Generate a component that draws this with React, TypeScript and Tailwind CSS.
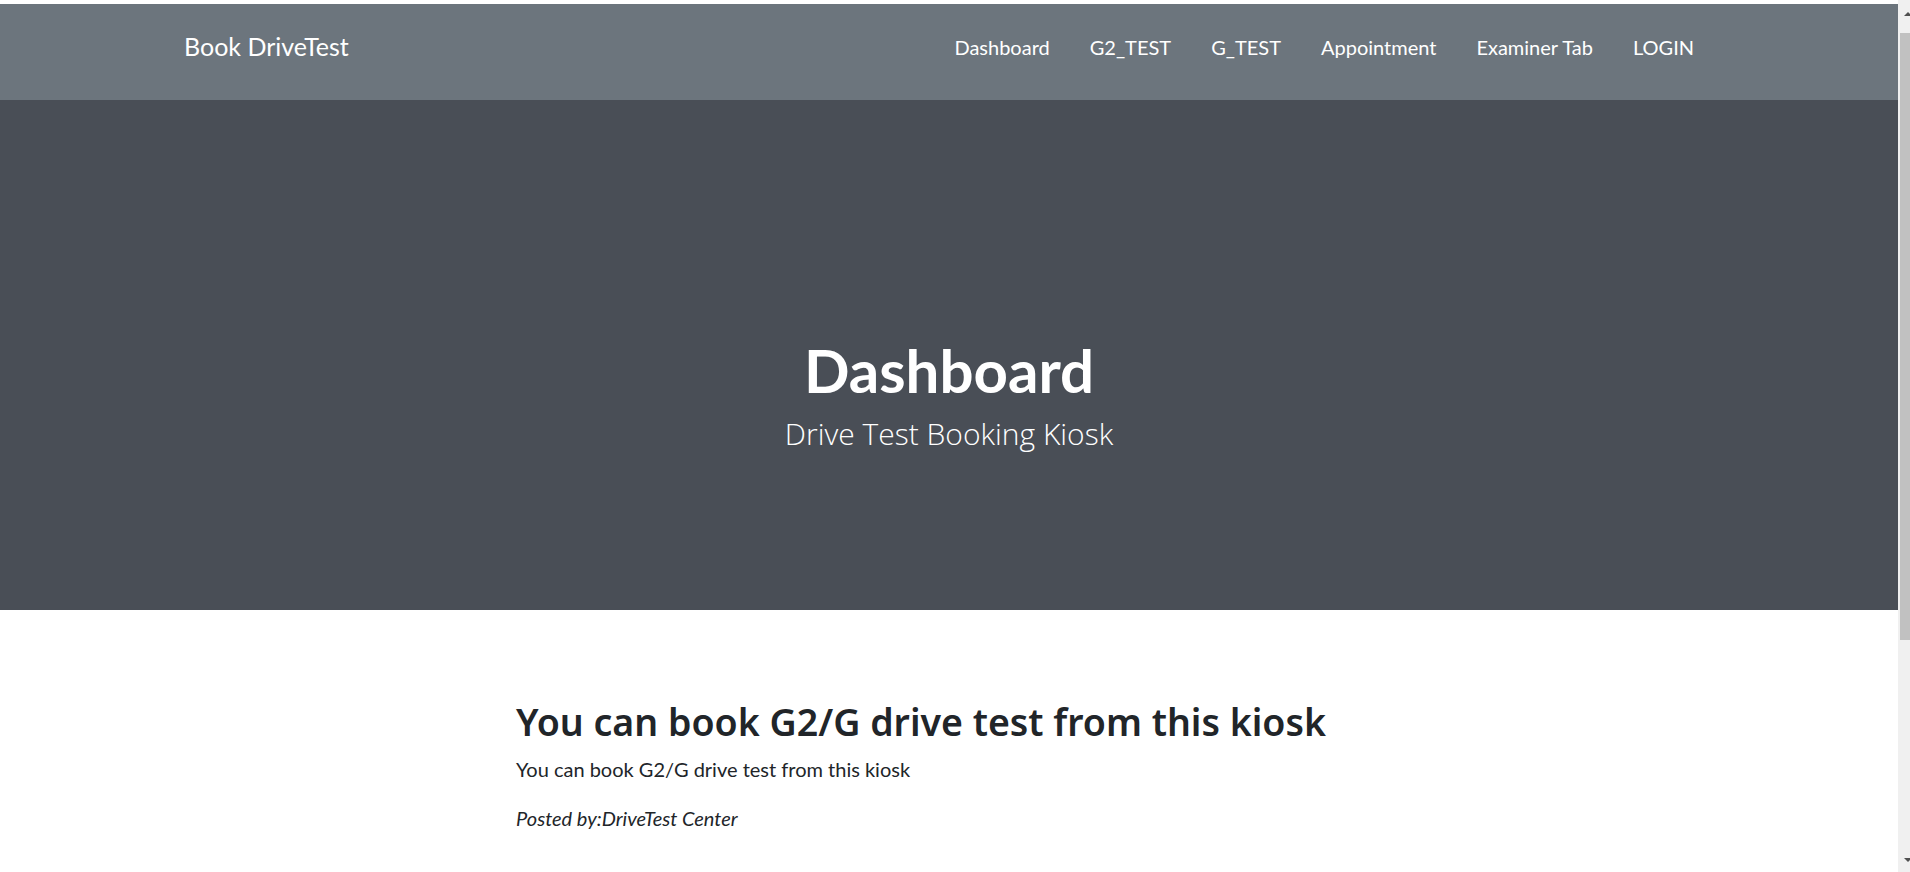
import React from "react";

const navLinks = ["Dashboard", "G2_TEST", "G_TEST", "Appointment", "Examiner Tab", "LOGIN"];

const Navbar: React.FC = () => {
  return (
    <nav className="bg-[#6c757d] h-[96px]">
      <div className="max-w-[1650px] mx-auto h-full px-[60px] pb-[11px] flex items-center justify-between">
        <a href="#" className="text-white text-[25px] leading-none">
          Book DriveTest
        </a>
        <ul className="flex items-center">
          {navLinks.map((link) => (
            <li key={link}>
              <a href="#" className="block px-[20px] text-white text-[20px] leading-none">
                {link}
              </a>
            </li>
          ))}
        </ul>
      </div>
    </nav>
  );
};

const Hero: React.FC = () => {
  return (
    <header className="bg-[#494e56] h-[510px] pt-[240px] flex flex-col items-center text-white">
      <h1 className="text-[60px] font-bold leading-none">Dashboard</h1>
      <span className="text-[30px] font-light leading-none mt-[19px] font-['Open_Sans',sans-serif]">
        Drive Test Booking Kiosk
      </span>
    </header>
  );
};

const PostPreview: React.FC = () => {
  return (
    <div className="max-w-[866px] mx-auto text-[#212529]">
      <h2 className="text-[37.5px] font-semibold leading-tight font-['Noto_Sans',sans-serif]">
        You can book G2/G drive test from this kiosk
      </h2>
      <h3 className="text-[20px] leading-snug mt-[10px]">You can book G2/G drive test from this kiosk</h3>
      <p className="text-[20px] italic leading-snug mt-[22px]">Posted by:DriveTest Center</p>
      <hr className="mt-[40px] border-[#dee2e6]" />
    </div>
  );
};

const Scrollbar: React.FC = () => {
  return (
    <aside className="w-[12px] h-[872px] shrink-0 bg-[#f0f0f0] flex flex-col items-end">
      <div className="h-[33px] w-full flex justify-end pt-[12px]">
        <div className="w-0 h-0 mr-[-2px] border-l-[4px] border-r-[4px] border-b-[4px] border-l-transparent border-r-transparent border-b-[#505050]" />
      </div>
      <div className="w-[10px] h-[607px] bg-[#c1c1c1]" />
      <div className="flex-1" />
      <div className="h-[14px] w-full flex justify-end">
        <div className="w-0 h-0 mr-[-2px] border-l-[4px] border-r-[4px] border-t-[4px] border-l-transparent border-r-transparent border-t-[#505050]" />
      </div>
    </aside>
  );
};

export default function App() {
  return (
    <div className="flex items-start bg-white font-['Lato',sans-serif]">
      <div className="flex-1 min-w-0 pt-[4px] min-h-[1200px]">
        <Navbar />
        <Hero />
        <main className="pt-[89px] pb-[120px]">
          <PostPreview />
        </main>
      </div>
      <Scrollbar />
    </div>
  );
}
